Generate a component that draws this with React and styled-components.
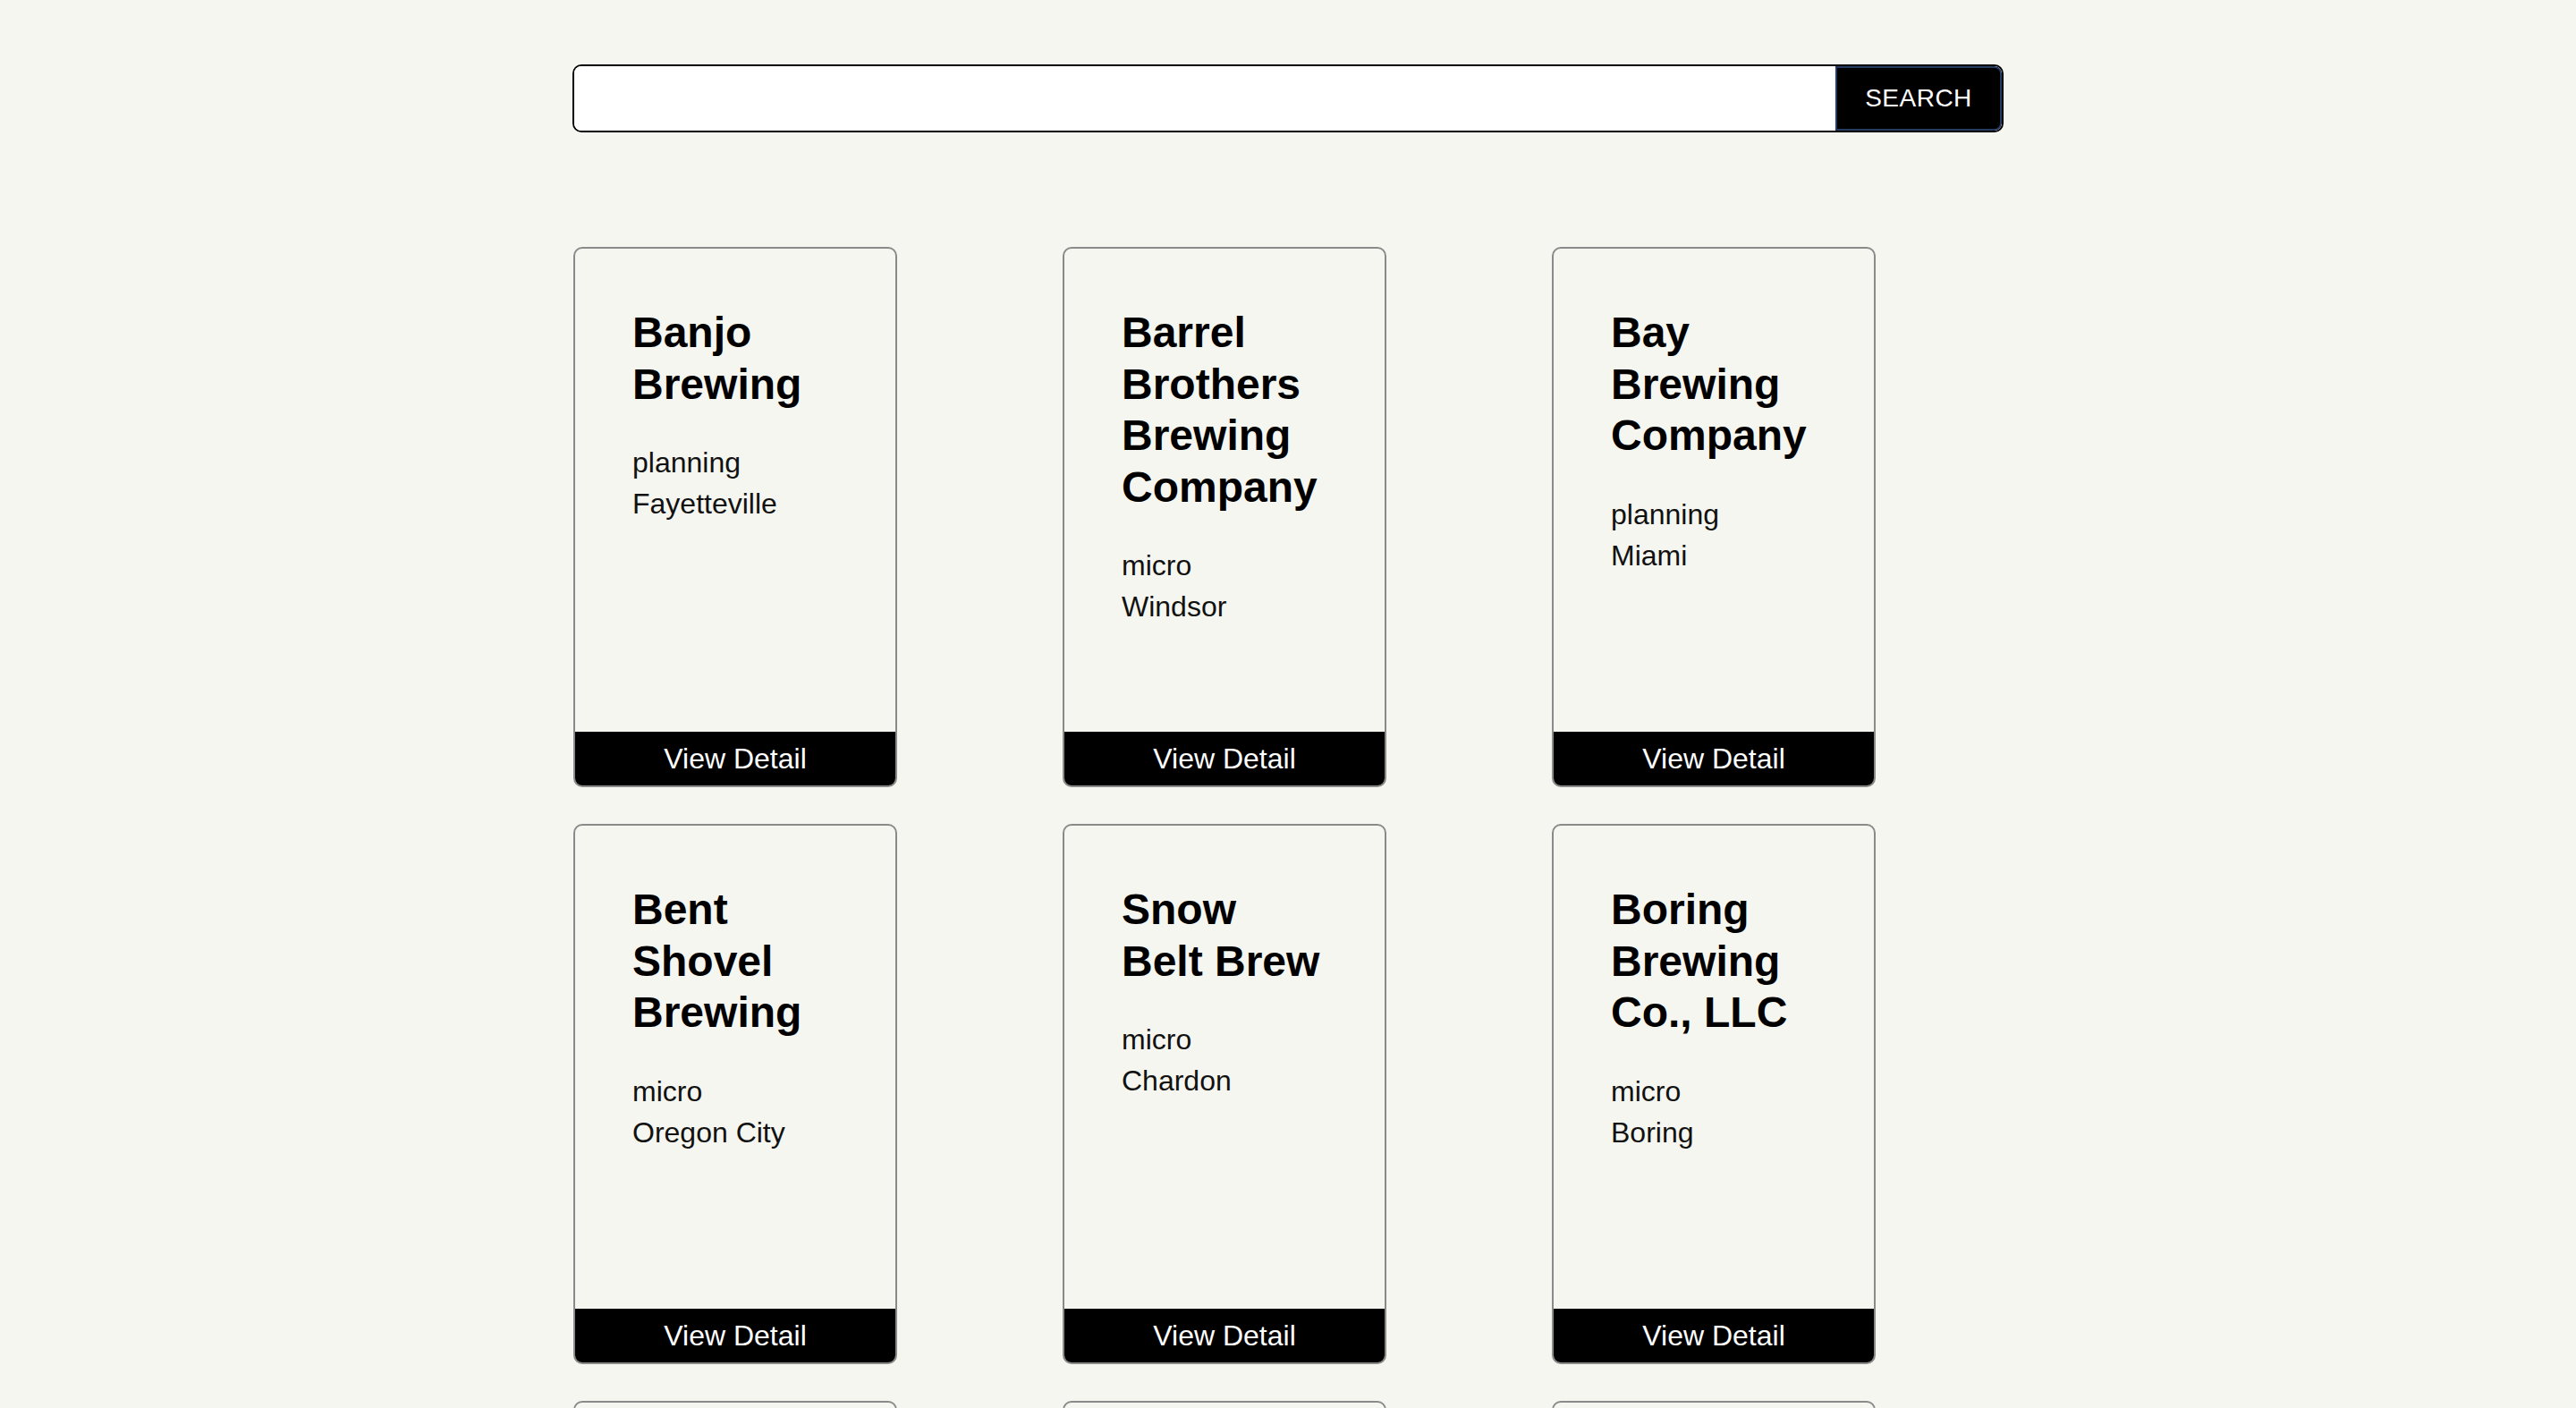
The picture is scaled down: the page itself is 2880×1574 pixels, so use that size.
import React from 'react';
import styled, { createGlobalStyle } from 'styled-components';

const breweries = [
  { id: 1, name: 'Banjo Brewing', type: 'planning', city: 'Fayetteville' },
  { id: 2, name: 'Barrel Brothers Brewing Company', type: 'micro', city: 'Windsor' },
  { id: 3, name: 'Bay Brewing Company', type: 'planning', city: 'Miami' },
  { id: 4, name: 'Bent Shovel Brewing', type: 'micro', city: 'Oregon City' },
  { id: 5, name: 'Snow Belt Brew', type: 'micro', city: 'Chardon' },
  { id: 6, name: 'Boring Brewing Co., LLC', type: 'micro', city: 'Boring' },
  { id: 7, name: 'Brew Bus Brewing', type: 'contract', city: 'Tampa' },
  { id: 8, name: 'Bluewater Brewing', type: 'micro', city: 'Seattle' },
  { id: 9, name: 'Brewery Nonsense', type: 'brewpub', city: 'Austin' },
];

const GlobalStyle = createGlobalStyle`
  html, body {
    margin: 0;
    padding: 0;
    background: #f6f6f0;
    color: #000;
    font-family: "Liberation Sans", Arial, sans-serif;
  }
`;

const Page = styled.main`
  width: 1600px;
  margin: 0 auto;
  padding-top: 72px;
`;

const SearchForm = styled.form`
  display: flex;
  height: 76px;
  border: 2px solid #000;
  border-radius: 10px;
  overflow: hidden;
  box-sizing: border-box;
  background: #fff;
`;

const SearchInput = styled.input`
  flex: 1;
  border: none;
  outline: none;
  background: #fff;
  padding: 0 20px;
  font-size: 28px;
  font-family: inherit;
`;

const SearchButton = styled.button`
  width: 186px;
  background: #000;
  color: #fff;
  border: 2px solid #243a5e;
  border-radius: 0 8px 8px 0;
  font-family: "Liberation Sans", Arial, sans-serif;
  font-size: 28px;
  letter-spacing: 0.5px;
  text-transform: uppercase;
  cursor: pointer;
`;

const Grid = styled.section`
  display: grid;
  grid-template-columns: repeat(3, 362px);
  column-gap: 185px;
  row-gap: 41px;
  margin-top: 128px;
  padding-left: 1px;
`;

const Card = styled.article`
  display: flex;
  flex-direction: column;
  height: 604px;
  box-sizing: border-box;
  border: 2px solid #8a8a8a;
  border-radius: 10px;
  overflow: hidden;
`;

const CardBody = styled.div`
  flex: 1;
  padding: 65px 64px 0 64px;
`;

const Title = styled.h2`
  margin: 0 0 36px;
  font-size: 48px;
  line-height: 57.6px;
  font-weight: 700;
`;

const Info = styled.p`
  margin: 0;
  font-size: 32px;
  line-height: 46px;
  color: #111;
`;

const DetailButton = styled.a`
  display: block;
  height: 60px;
  line-height: 60px;
  background: #000;
  color: #fff;
  text-align: center;
  font-size: 32px;
  text-decoration: none;
  cursor: pointer;
`;

const BreweryCard = ({ brewery }) => (
  <Card>
    <CardBody>
      <Title>{brewery.name}</Title>
      <Info>{brewery.type}</Info>
      <Info>{brewery.city}</Info>
    </CardBody>
    <DetailButton href="#">View Detail</DetailButton>
  </Card>
);

export default function App() {
  return (
    <>
      <GlobalStyle />
      <Page>
        <SearchForm onSubmit={(e) => e.preventDefault()}>
          <SearchInput type="text" />
          <SearchButton type="submit">Search</SearchButton>
        </SearchForm>
        <Grid>
          {breweries.map((b) => (
            <BreweryCard key={b.id} brewery={b} />
          ))}
        </Grid>
      </Page>
    </>
  );
}
